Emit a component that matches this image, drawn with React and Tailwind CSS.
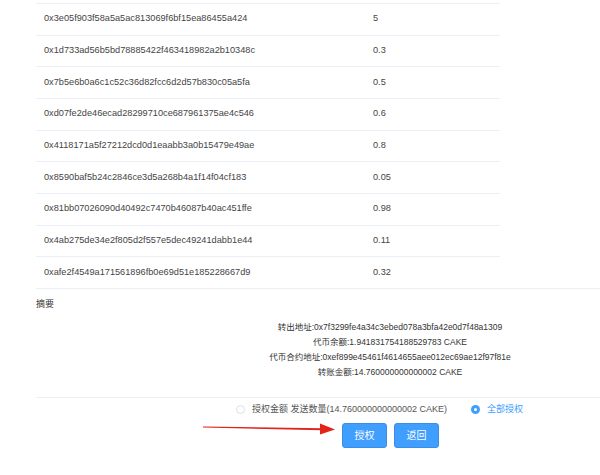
import React from 'react';

const rows = [
  ['0x3e05f903f58a5a5ac813069f6bf15ea86455a424', '5'],
  ['0x1d733ad56b5bd78885422f463418982a2b10348c', '0.3'],
  ['0x7b5e6b0a6c1c52c36d82fcc6d2d57b830c05a5fa', '0.5'],
  ['0xd07fe2de46ecad28299710ce687961375ae4c546', '0.6'],
  ['0x4118171a5f27212dcd0d1eaabb3a0b15479e49ae', '0.8'],
  ['0x8590baf5b24c2846ce3d5a268b4a1f14f04cf183', '0.05'],
  ['0x81bb07026090d40492c7470b46087b40ac451ffe', '0.98'],
  ['0x4ab275de34e2f805d2f557e5dec49241dabb1e44', '0.11'],
  ['0xafe2f4549a171561896fb0e69d51e185228667d9', '0.32'],
];

const summary = [
  '转出地址:0x7f3299fe4a34c3ebed078a3bfa42e0d7f48a1309',
  '代币余额:1.941831754188529783 CAKE',
  '代币合约地址:0xef899e45461f4614655aee012ec69ae12f97f81e',
  '转账金额:14.760000000000002 CAKE',
];

export default function App() {
  return (
    <div
      className="relative w-[600px] h-[475px] bg-white overflow-hidden text-[#444]"
      style={{ fontFamily: '"Liberation Sans", "Noto Sans CJK SC", sans-serif' }}
    >
      <div className="pt-[3px] pl-[36px]">
        {/* table */}
        <div className="w-[464px]">
          {rows.map(([addr, amt], i) => (
            <div key={i} className="flex items-center h-[31.67px] border-t border-[#ebeef5] text-[9.2px]">
              <div className="w-[329px] pl-[8px]">{addr}</div>
              <div className="pl-[8px]">{amt}</div>
            </div>
          ))}
        </div>
        <div className="border-t border-[#ebeef5]" />

        {/* 摘要 */}
        <div className="pt-[9px] text-[9px] leading-[12px] text-[#333]">摘要</div>
        <div className="flex justify-center pl-[144px] pt-[10px] pb-[17px]">
          <div className="text-center text-[8.5px] leading-[15px] text-[#333]">
            {summary.map((s, i) => (
              <div key={i}>{s}</div>
            ))}
          </div>
        </div>
        <div className="border-t border-[#ebeef5]" />

        {/* radios */}
        <div className="flex items-center h-[24px] pl-[200px] text-[9px] text-[#555]">
          <span className="w-[9px] h-[9px] rounded-full border border-[#dcdfe6] bg-white" />
          <span className="ml-[7px]">授权金额 发送数量(14.760000000000002 CAKE)</span>
          <span className="ml-[24px] w-[9px] h-[9px] rounded-full bg-[#409eff] flex items-center justify-center">
            <span className="w-[3px] h-[3px] rounded-full bg-white" />
          </span>
          <span className="ml-[7px] text-[#409eff]">全部授权</span>
        </div>

        {/* buttons */}
        <div className="flex gap-[7px] pl-[306px] pt-[1px]">
          <button className="w-[45px] h-[25px] rounded-[3px] bg-[#409eff] border border-[#3a8ee6] text-white text-[10px]">授权</button>
          <button className="w-[45px] h-[25px] rounded-[3px] bg-[#409eff] border border-[#3a8ee6] text-white text-[10px]">返回</button>
        </div>
      </div>

      {/* red annotation arrow */}
      <svg className="absolute left-[200px] top-[420px]" width="140" height="16" viewBox="0 0 140 16">
        <path d="M3 6.5 L122 8.2 L122 10.2 L3 7.5 Z" fill="#e2231a" />
        <path d="M120 3.5 L135 9.5 L120 14.5 Z" fill="#e2231a" />
      </svg>
    </div>
  );
}
